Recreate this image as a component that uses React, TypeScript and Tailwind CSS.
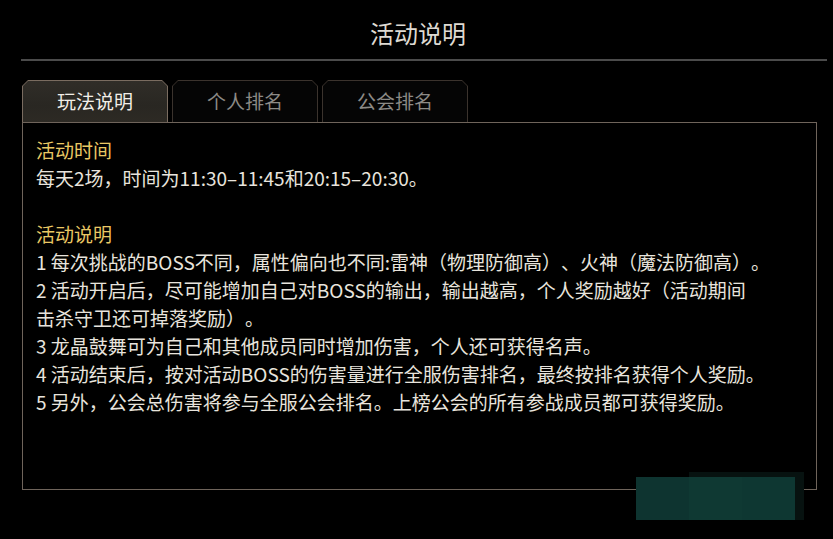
import React from "react";

const font = { fontFamily: '"Noto Sans CJK SC", "Noto Sans", sans-serif' };

type TabProps = { label: string; active?: boolean };

function Tab({ label, active }: TabProps) {
  return (
    <div
      className={`w-[146px] h-[42px] pt-[1px] px-[1px] [clip-path:polygon(6px_0,calc(100%-6px)_0,100%_6px,100%_100%,0_100%,0_6px)] ${
        active ? "bg-[#7a6c60]" : "bg-[#3b332d]"
      }`}
    >
      <div
        className={`w-full h-full flex items-center justify-center text-[19px] [clip-path:polygon(5px_0,calc(100%-5px)_0,100%_5px,100%_100%,0_100%,0_5px)] ${
          active
            ? "bg-[linear-gradient(180deg,#302d28_0%,#292722_60%,#2d2a24_100%)] text-[#f2eee8]"
            : "bg-[#050505] text-[#8c8a86]"
        }`}
      >
        {label}
      </div>
    </div>
  );
}

const rules = [
  "1 每次挑战的BOSS不同，属性偏向也不同:雷神（物理防御高）、火神（魔法防御高）。",
  "2 活动开启后，尽可能增加自己对BOSS的输出，输出越高，个人奖励越好（活动期间",
  "击杀守卫还可掉落奖励）。",
  "3 龙晶鼓舞可为自己和其他成员同时增加伤害，个人还可获得名声。",
  "4 活动结束后，按对活动BOSS的伤害量进行全服伤害排名，最终按排名获得个人奖励。",
  "5 另外，公会总伤害将参与全服公会排名。上榜公会的所有参战成员都可获得奖励。",
];

export default function App() {
  return (
    <div className="relative w-[833px] h-[539px] bg-black overflow-hidden" style={font}>
      <div className="h-[59px] pt-[18px] pl-[3px] flex justify-center">
        <h1 className="text-[24px] leading-[30px] text-[#dedad2] font-normal">活动说明</h1>
      </div>
      <div className="ml-[21px] w-[806px] h-[2px] bg-[#4b4b4b]" />

      <div className="mt-[19px] ml-[22px] flex gap-[4px]">
        <Tab label="玩法说明" active />
        <Tab label="个人排名" />
        <Tab label="公会排名" />
      </div>

      <div className="ml-[22px] w-[795px] h-[368px] border border-[#6f645b] pt-[13px] pl-[13px] text-[19px] leading-[28px] text-[#e8e4dd] whitespace-nowrap [text-spacing-trim:space-all]">
        <div className="text-[#eac864]">活动时间</div>
        <div>每天2场，时间为11:30–11:45和20:15–20:30。</div>
        <div className="h-[28px]" />
        <div className="text-[#eac864]">活动说明</div>
        {rules.map((line) => (
          <div key={line}>{line}</div>
        ))}
      </div>

      {/* dimmed action button in the lower right corner */}
      <div className="absolute left-[689px] top-[472px] w-[115px] h-[48px] bg-[#071210]" />
      <div className="absolute left-[636px] top-[477px] w-[159px] h-[43px] flex">
        <div className="flex-1 bg-[#0e3430]" />
        <div className="flex-1 bg-[#0f3933]" />
        <div className="flex-1 bg-[#0e3732]" />
      </div>
    </div>
  );
}
